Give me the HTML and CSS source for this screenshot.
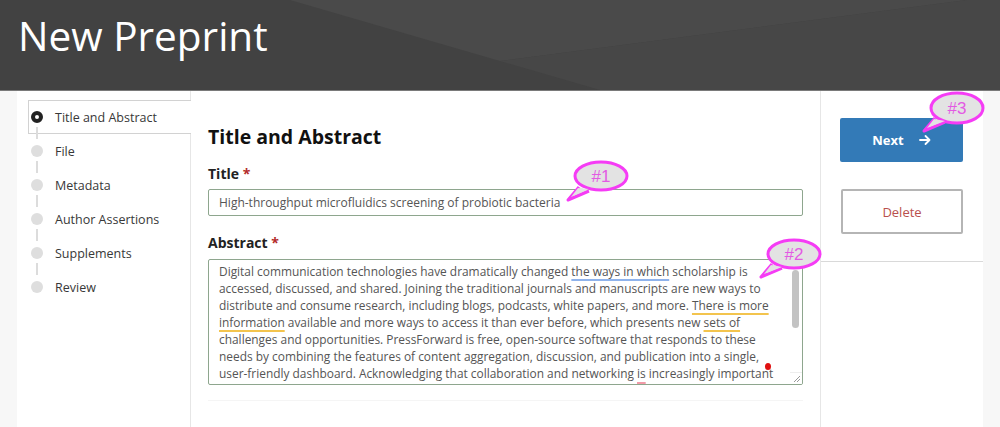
FILE: index.html
```html
<!DOCTYPE html>
<html>
<head>
<meta charset="utf-8">
<link rel="stylesheet" href="styles.css">
</head>
<body>
<header class="topbar">
  <svg class="topbar-bg" viewBox="0 0 1000 90" preserveAspectRatio="none" aria-hidden="true">
    <rect x="0" y="0" width="1000" height="90" fill="#424242"/>
    <polygon points="290,0 967,0 500,61" fill="#4a4a4a"/>
    <polygon points="967,0 1000,0 1000,90 600,90 500,61" fill="#474747"/>
  </svg>
  <h1 class="topbar-title">New Preprint</h1>
</header>

<div class="page">
  <nav class="sidebar">
    <ul class="steps">
      <li class="step active"><span class="dot"></span>Title and Abstract</li>
      <li class="step"><span class="dot"></span>File</li>
      <li class="step"><span class="dot"></span>Metadata</li>
      <li class="step"><span class="dot"></span>Author Assertions</li>
      <li class="step"><span class="dot"></span>Supplements</li>
      <li class="step last"><span class="dot"></span>Review</li>
    </ul>
  </nav>

  <main class="main">
    <h2 class="section-title">Title and Abstract</h2>
    <label class="field-label">Title <span class="req">*</span></label>
    <div class="input">High-throughput microfluidics screening of probiotic bacteria</div>
    <label class="field-label abstract-label">Abstract <span class="req">*</span></label>
    <div class="textarea">
      <div class="ta-text">
        <div class="ln">Digital communication technologies have dramatically changed <span class="u-blue">the ways in which</span> scholarship is</div>
        <div class="ln">accessed, discussed, and shared. Joining the traditional journals and manuscripts are new ways to</div>
        <div class="ln">distribute and consume research, including blogs, podcasts, white papers, and more. <span class="u-yellow">There is more</span></div>
        <div class="ln"><span class="u-yellow">information</span> available and more ways to access it than ever before, which presents new <span class="u-yellow">sets of</span></div>
        <div class="ln">challenges and opportunities. PressForward is free, open-source software that responds to these</div>
        <div class="ln">needs by combining the features of content aggregation, discussion, and publication into a single,</div>
        <div class="ln">user-friendly dashboard. Acknowledging that collaboration and networking <span class="u-pink">is</span> increasingly important</div>
      </div>
      <div class="scrollbar"><div class="thumb"></div></div>
      <div class="scroll-corner"></div>
      <span class="red-dot"></span>
    </div>
    <div class="below-line"></div>
  </main>

  <aside class="actions">
    <button class="btn btn-next">Next
      <svg class="arrow" viewBox="0 0 12 12" width="12" height="12" aria-hidden="true">
        <path d="M1 6 H10.5 M6.5 2 L10.5 6 L6.5 10" fill="none" stroke="#fff" stroke-width="1.8" stroke-linecap="round" stroke-linejoin="round"/>
      </svg>
    </button>
    <button class="btn btn-delete">Delete</button>
    <div class="actions-rule"></div>
  </aside>
</div>

<svg class="bubble b1" viewBox="0 0 70 50" width="70" height="50" aria-hidden="true">
  <path d="M14 30 L3 43 L24 34" fill="#e3e3e3" stroke="#f53cf5" stroke-width="3" stroke-linejoin="round"/>
  <ellipse cx="36" cy="19" rx="26" ry="14" fill="#e3e3e3" stroke="#f53cf5" stroke-width="3"/>
  <path d="M13 31 L6 40 L24 32 Z" fill="#e3e3e3"/>
  <text x="36" y="25" text-anchor="middle" class="bubble-text">#1</text>
</svg>
<svg class="bubble b2" viewBox="0 0 70 50" width="70" height="50" aria-hidden="true">
  <path d="M14 30 L3 43 L24 34" fill="#e3e3e3" stroke="#f53cf5" stroke-width="3" stroke-linejoin="round"/>
  <ellipse cx="36" cy="20" rx="26" ry="14" fill="#e3e3e3" stroke="#f53cf5" stroke-width="3"/>
  <path d="M13 31 L6 40 L24 33 Z" fill="#e3e3e3"/>
  <text x="36" y="26" text-anchor="middle" class="bubble-text">#2</text>
</svg>
<svg class="bubble b3" viewBox="0 0 70 50" width="70" height="50" aria-hidden="true">
  <path d="M14 30 L3 43 L24 34" fill="#e3e3e3" stroke="#f53cf5" stroke-width="3" stroke-linejoin="round"/>
  <ellipse cx="36" cy="20" rx="26" ry="15" fill="#e3e3e3" stroke="#f53cf5" stroke-width="3"/>
  <path d="M13 31 L6 40 L24 33 Z" fill="#e3e3e3"/>
  <text x="36" y="26" text-anchor="middle" class="bubble-text">#3</text>
</svg>
</body>
</html>
```

FILE: styles.css
```css
* { box-sizing: border-box; }

html, body {
  margin: 0;
  padding: 0;
}

body {
  background: #f7f7f7;
  font-family: "Open Sans", "Noto Sans", sans-serif;
  color: #333;
  height: 427px;
  overflow: hidden;
}

.topbar {
  position: relative;
  height: 91px;
  border-bottom: 1px solid #7a7a7a;
  overflow: hidden;
}

.topbar-bg {
  position: absolute;
  left: 0;
  top: 0;
  width: 100%;
  height: 100%;
}

.topbar-title {
  position: relative;
  margin: 0;
  padding: 12px 0 0 18px;
  font-size: 40.5px;
  line-height: 48px;
  font-weight: 400;
  color: #fff;
}

.page {
  display: flex;
  margin: 0 17px;
  background: #fff;
  height: 336px;
}

/* sidebar */
.sidebar {
  width: 174px;
  flex: none;
  border-right: 1px solid #e6e6e6;
  padding-top: 9px;
}

.steps {
  list-style: none;
  margin: 0;
  padding: 0;
}

.step {
  position: relative;
  display: flex;
  align-items: center;
  height: 34px;
  margin-left: 11px;
  padding-left: 27px;
  font-size: 12.5px;
  color: #383838;
}

.step.active {
  height: 34px;
  border: 1px solid #d2d2d2;
  border-right: none;
  margin-right: -1px;
  background: #fff;
  padding-left: 26px;
}

.dot {
  position: absolute;
  left: 3px;
  top: 11px;
  width: 12px;
  height: 12px;
  border-radius: 50%;
  background: #dedede;
}

.step.active .dot {
  left: 2px;
  top: 10px;
  background: #fff;
  border: 4px solid #222;
}

.step:not(.last)::after {
  content: "";
  position: absolute;
  left: 8px;
  top: 27px;
  width: 2px;
  height: 12px;
  background: #dcdcdc;
}

.step.active::after {
  left: 7px;
  top: 26px;
}

/* main */
.main {
  width: 630px;
  flex: none;
  border-right: 1px solid #e6e6e6;
  padding: 32px 17px 0 17px;
}

.section-title {
  margin: 0 0 13px;
  font-size: 19.5px;
  line-height: 28px;
  font-weight: 700;
  color: #111;
}

.field-label {
  display: block;
  font-size: 14px;
  line-height: 20px;
  font-weight: 700;
  color: #222;
  margin-bottom: 5px;
}

.req {
  color: #b32b2b;
}

.input {
  height: 27px;
  border: 1px solid #8ea68e;
  border-radius: 2px;
  padding: 0 10px;
  font-size: 12px;
  line-height: 25px;
  color: #555;
}

.abstract-label {
  margin-top: 17px;
  margin-bottom: 6px;
}

.textarea {
  position: relative;
  height: 126px;
  border: 1px solid #8ea68e;
  border-radius: 2px;
  overflow: hidden;
}

.ta-text {
  padding: 3px 0 0 10px;
  font-size: 11.92px;
  line-height: 17px;
  color: #555;
}

.ln {
  white-space: nowrap;
}

.u-blue, .u-yellow, .u-pink {
  text-decoration: underline;
  text-decoration-thickness: 2px;
  text-underline-offset: 3px;
}
.u-blue { text-decoration-color: #8fb3ec; }
.u-yellow { text-decoration-color: #f3c44e; }
.u-pink { text-decoration-color: #f29aa8; text-decoration-thickness: 3px; text-underline-offset: 4px; }

.scrollbar {
  position: absolute;
  right: 1px;
  top: 0;
  width: 11px;
  height: 111px;
  background: #fff;
}

.thumb {
  margin: 10px 0 0 2px;
  width: 7px;
  height: 58px;
  border-radius: 4px;
  background: #c3c3c3;
}

.scroll-corner {
  position: absolute;
  right: 0;
  bottom: 0;
  width: 12px;
  height: 12px;
  background: #fff;
  border-top: 1px solid #eee;
}

.scroll-corner::after {
  content: "";
  position: absolute;
  right: 2px;
  bottom: 2px;
  width: 6px;
  height: 6px;
  background: linear-gradient(135deg, transparent 45%, #999 45%, #999 55%, transparent 55%, transparent 70%, #999 70%, #999 80%, transparent 80%);
}

.red-dot {
  position: absolute;
  left: 556px;
  top: 103px;
  width: 6px;
  height: 7px;
  border-radius: 50%;
  background: #e01010;
}

.below-line {
  margin-top: 15px;
  height: 1px;
  background: #f5f5f5;
}

/* actions */
.actions {
  flex: 1;
  padding: 27px 19px 0 19px;
}

.btn {
  display: flex;
  align-items: center;
  justify-content: center;
  width: 123px;
  font-family: "Open Sans", "Noto Sans", sans-serif;
  font-size: 13px;
  cursor: pointer;
}

.btn-next {
  height: 44px;
  border: none;
  border-radius: 2px;
  background: #337ab7;
  color: #fff;
  font-weight: 700;
  gap: 15px;
  padding-left: 6px;
}

.btn-delete {
  margin-top: 27px;
  margin-left: 1px;
  width: 122px;
  height: 45px;
  background: #fff;
  border: 2px solid #b5b5b5;
  border-radius: 2px;
  color: #b9504d;
}

.actions-rule {
  margin: 27px -19px 0 -19px;
  height: 1px;
  background: #d9d9d9;
}

/* annotation bubbles */
.bubble {
  position: absolute;
  overflow: visible;
}
.b1 { left: 565px; top: 157px; }
.b2 { left: 758px; top: 234px; }
.b3 { left: 921px; top: 88px; }

.bubble-text {
  font-family: "Liberation Sans", Arial, sans-serif;
  font-size: 17px;
  fill: #e35ae3;
}
```
